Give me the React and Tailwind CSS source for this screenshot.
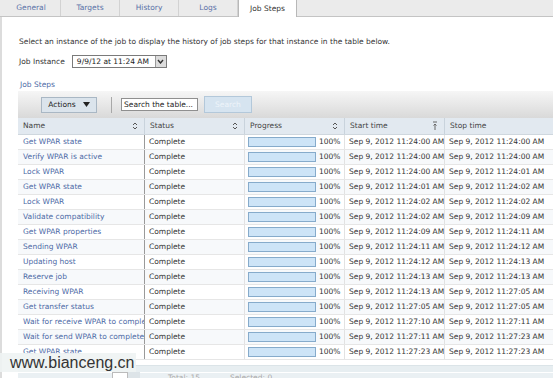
import React from "react";

const rows = [
  ["Get WPAR state", "11:24:00", "11:24:00"],
  ["Verify WPAR is active", "11:24:00", "11:24:00"],
  ["Lock WPAR", "11:24:00", "11:24:01"],
  ["Get WPAR state", "11:24:01", "11:24:02"],
  ["Lock WPAR", "11:24:02", "11:24:02"],
  ["Validate compatibility", "11:24:02", "11:24:09"],
  ["Get WPAR properties", "11:24:09", "11:24:11"],
  ["Sending WPAR", "11:24:11", "11:24:12"],
  ["Updating host", "11:24:12", "11:24:13"],
  ["Reserve job", "11:24:13", "11:24:13"],
  ["Receiving WPAR", "11:24:13", "11:27:05"],
  ["Get transfer status", "11:27:05", "11:27:05"],
  ["Wait for receive WPAR to complete", "11:27:10", "11:27:11"],
  ["Wait for send WPAR to complete", "11:27:11", "11:27:23"],
  ["Get WPAR state", "11:27:23", "11:27:23"],
];

const tabs = ["General", "Targets", "History", "Logs", "Job Steps"];

function SortIcon() {
  return (
    <svg width="6" height="8" viewBox="0 0 6 8" className="shrink-0">
      <path d="M1 3 L3 1 L5 3" fill="none" stroke="#555" strokeWidth="1" />
      <path d="M1 5 L3 7 L5 5" fill="none" stroke="#555" strokeWidth="1" />
    </svg>
  );
}

function SortAsc() {
  return (
    <svg width="6" height="10" viewBox="0 0 6 10" className="shrink-0">
      <path d="M1 1 H5" stroke="#666" strokeWidth="1" />
      <path d="M3 9 V3 M1.5 4.5 L3 3 L4.5 4.5" fill="none" stroke="#666" strokeWidth="1" />
    </svg>
  );
}

function HeaderCell({ label, icon, last }) {
  return (
    <div className={`flex items-center justify-between pl-[5px] pr-[6px] ${last ? "" : "border-r border-[#c9d3dc]"}`}>
      <span>{label}</span>
      {icon}
    </div>
  );
}

export default function App() {
  return (
    <div
      className="relative w-[553px] h-[378px] overflow-hidden bg-white text-[7.5px] text-[#333]"
      style={{ fontFamily: '"DejaVu Sans", Verdana, sans-serif' }}
    >
      {/* tab bar */}
      <div className="flex h-[17px] bg-[#ebebeb] border-b border-[#c4c4c4] pl-[2px]">
        {tabs.map((t, i) => {
          const active = i === tabs.length - 1;
          return (
            <div
              key={t}
              className={`w-[59px] flex items-center justify-center border-r ${
                active
                  ? "bg-white text-[#333] border-[#b8b8b8] border-l -mb-px"
                  : "text-[#5a72a8] border-[#d2d2d2]"
              } ${i === 0 ? "w-[56px]" : ""}`}
            >
              {t}
            </div>
          );
        })}
      </div>

      <div className="flex h-[361px]">
        <div className="w-[2px] bg-[#dcdcdc]" />
        <div className="flex-1 flex flex-col pl-[16px]">
          <div className="mt-[20px] pl-[1px] leading-[10px]">
            Select an instance of the job to display the history of job steps for that instance in the table below.
          </div>

          <div className="mt-[8px] flex items-center pl-[1px] h-[13px]">
            <span>Job Instance</span>
            <div className="ml-[7px] flex h-[13px] w-[95px] border border-[#7a7a7a] bg-white">
              <span className="flex-1 pl-[4px] leading-[11px] text-[#222]">9/9/12 at 11:24 AM</span>
              <span className="w-[11px] flex items-center justify-center bg-[#dcdcdc] border-l border-[#9a9a9a]">
                <svg width="7" height="5" viewBox="0 0 7 5">
                  <path d="M1 1 L3.5 4 L6 1" fill="none" stroke="#333" strokeWidth="1.4" />
                </svg>
              </span>
            </div>
          </div>

          <div className="mt-[12px] pl-[2px] leading-[10px] text-[#4d6aa6]">Job Steps</div>

          {/* toolbar */}
          <div className="mt-[1px] h-[27px] flex items-center bg-gradient-to-b from-[#f6f6f6] to-[#d9d9d9] pl-[23px]">
            <div className="w-[56px] h-[16px] flex items-center justify-center gap-[7px] bg-[#dbe4ec] border border-[#a9b7c4] text-[#222]">
              <span>Actions</span>
              <svg width="7" height="5" viewBox="0 0 7 5">
                <path d="M0 0 H7 L3.5 5 Z" fill="#222" />
              </svg>
            </div>
            <div className="ml-[14px] w-px h-[16px] bg-[#a8a8a8]" />
            <div className="ml-[9px] w-[77px] h-[13px] bg-white border border-[#8f8f8f] pl-[2px] leading-[11px] text-[#222]">
              Search the table...
            </div>
            <div className="ml-[6px] w-[48px] h-[17px] flex items-center justify-center bg-[#d6e4f0] border border-[#b3c8da] text-[#eef4fa]">
              Search
            </div>
          </div>

          {/* header */}
          <div className="grid grid-cols-[127px_100px_100px_100px_1fr] h-[17px] bg-[#e2e9f0] border-b border-[#cfd7de] text-[#444]">
            <HeaderCell label="Name" icon={<SortIcon />} />
            <HeaderCell label="Status" icon={<SortIcon />} />
            <HeaderCell label="Progress" icon={<SortIcon />} />
            <HeaderCell label="Start time" icon={<SortAsc />} />
            <HeaderCell label="Stop time" last />
          </div>

          {/* rows */}
          {rows.map(([name, start, stop], i) => (
            <div
              key={i}
              className={`grid grid-cols-[127px_100px_100px_100px_1fr] h-[15px] border-b border-[#e6e6e6] ${
                i % 2 ? "bg-[#f7f9fb]" : "bg-white"
              }`}
            >
              <div className="pl-[5px] flex items-center whitespace-nowrap overflow-hidden border-r border-[#9a9a9a] text-[#4d6aa6]">
                {name}
              </div>
              <div className="pl-[4px] flex items-center border-r border-[#e2e2e2]">Complete</div>
              <div className="pl-[3px] flex items-center border-r border-[#e2e2e2]">
                <div className="w-[68px] h-[10px] bg-[#cde4f7] border border-[#86abcb]" />
                <span className="ml-[3px]">100%</span>
              </div>
              <div className="pl-[4px] flex items-center whitespace-nowrap overflow-hidden border-r border-[#e2e2e2]">
                Sep 9, 2012 {start} AM
              </div>
              <div className="pl-[4px] flex items-center whitespace-nowrap overflow-hidden">
                Sep 9, 2012 {stop} AM
              </div>
            </div>
          ))}

          <div className="h-[5px]" />
          <div className="flex-1 bg-[#e7eef1] border-t border-[#dbe4e8]" />
        </div>
      </div>

      {/* pagination strip, mostly below the window edge */}
      <div className="absolute left-[18px] top-[372px] right-0 h-[12px] flex items-start bg-[#eaf0f3] border-t border-white text-[#aaa] leading-[10px]">
        <span className="ml-[150px]">Total: 15</span>
        <span className="ml-[30px]">Selected: 0</span>
      </div>

      {/* watermark */}
      <div
        className="absolute left-0 top-[353px] w-[136px] h-[19px] bg-[#eef3f3]/90 pl-[10px] leading-[20px] text-[16px] text-[#333]"
        style={{ fontFamily: '"Liberation Sans", Arial, sans-serif' }}
      >
        www.bianceng.cn
      </div>
      <div className="absolute left-[112px] top-[372px] w-[16px] h-[8px] bg-white border border-[#bbb]" />
      <div className="absolute left-[128px] top-[372px] w-[12px] h-[8px] bg-[#dde4e8]" />
    </div>
  );
}
